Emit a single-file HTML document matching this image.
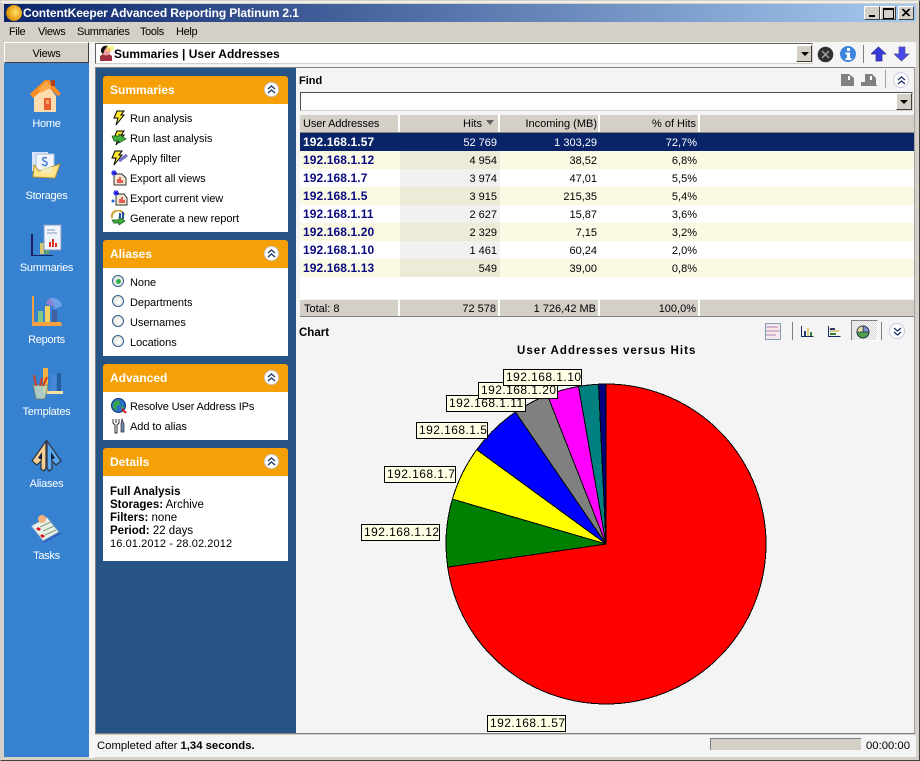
<!DOCTYPE html>
<html><head><meta charset="utf-8"><style>
html,body{margin:0;padding:0}
body{width:920px;height:761px;overflow:hidden;position:relative;background:#d4d0c8;font:11px/13px "Liberation Sans",sans-serif;color:#000}
.a,.t{position:absolute}
.t{white-space:nowrap;line-height:13px}
.b{font-weight:bold}
.s{left:4px;width:85px;text-align:center;color:#fff;font-size:11px;letter-spacing:-.25px}
.i{left:130px;font-size:11px;letter-spacing:-.05px}
.m{top:26px;font-size:11px;letter-spacing:-.35px}
.ph{position:absolute;left:103px;width:185px;height:28px;background:#f4a006;border-radius:3px 3px 0 0}
.pb{position:absolute;left:103px;width:185px;background:#fff}
.pt{position:absolute;left:110px;color:#fff;font-weight:bold;font-size:12px;white-space:nowrap;line-height:13px}
.c{position:absolute;width:13px;height:13px;border-radius:50%;background:#fff;border:1px solid #c8cce0;left:264px}
.c svg{position:absolute;left:2px;top:2px}
.r{position:absolute;left:300px;width:614px;height:18px}
.r .t{top:4px}
.r .n{top:3px;left:3px;font-weight:bold;color:#0a0a80;font-size:12px;letter-spacing:.1px}
.h1{right:417px}.h2{right:317px}.h3{right:217px}
.hb{position:absolute;left:400px;width:100px;height:18px;background:#ecebd8}
.hd{position:absolute;top:115px;height:17px;background:#d4d0c8;border-right:2px solid #fff;box-sizing:border-box}
.ft{position:absolute;top:300px;height:16px;background:#d4d0c8;border-right:2px solid #fff;box-sizing:border-box}
.lb{position:absolute;background:#ffffe6;border:1px solid #000;box-sizing:border-box;height:17px;font:12px/15px "Liberation Sans",sans-serif;letter-spacing:.45px;padding-left:2px;white-space:nowrap}
.rd{position:absolute;left:112px;width:10px;height:10px;border-radius:50%;border:1.5px solid #2f5c8f;background:radial-gradient(circle at 60% 60%,#fff,#dcd8cc)}
.btn{position:absolute;background:#d4d0c8;border:1px solid;border-color:#fff #404040 #404040 #fff;box-sizing:border-box}
svg{display:block}
</style></head><body>
<div class="a" style="left:0;top:0;width:920px;height:761px;border:1px solid #404040;border-top-color:#d4d0c8;border-left-color:#d4d0c8;box-sizing:border-box"></div>
<div class="a" style="left:1px;top:1px;width:917px;height:2px;background:#f0eee8"></div>
<div class="a" style="left:4px;top:4px;width:912px;height:18px;background:linear-gradient(90deg,#0a246a,#a6caf0)"></div>
<div class="a" style="left:6px;top:5px;width:16px;height:16px;border-radius:50%;background:radial-gradient(circle at 60% 45%,#ffe070,#e8a010 55%,#8a5a10)"></div>
<div class="t b" style="left:23px;top:7px;color:#fff;font-size:12px;letter-spacing:-.1px">ContentKeeper Advanced Reporting Platinum 2.1</div>
<div class="btn" style="left:864px;top:6px;width:16px;height:14px"><div class="a" style="left:4px;top:8px;width:6px;height:2px;background:#000"></div></div>
<div class="btn" style="left:880px;top:6px;width:16px;height:14px"><div class="a" style="left:2px;top:1px;width:9px;height:8px;border:1px solid #000;border-top-width:2px"></div></div>
<div class="btn" style="left:898px;top:6px;width:16px;height:14px"><svg width="14" height="12"><path d="M3 2L10 9M4 2L11 9M10 2L3 9M11 2L4 9" stroke="#000"/></svg></div>
<div class="t m" style="left:9px">File</div>
<div class="t m" style="left:38px">Views</div>
<div class="t m" style="left:77px">Summaries</div>
<div class="t m" style="left:140px">Tools</div>
<div class="t m" style="left:176px">Help</div>

<!-- sidebar -->
<div class="btn" style="left:4px;top:42px;width:85px;height:21px"></div>
<div class="t" style="left:4px;top:48px;width:85px;text-align:center;font-size:11px;letter-spacing:-.25px">Views</div>
<div class="a" style="left:4px;top:63px;width:85px;height:694px;background:#3682d0"></div>
<div class="a" style="left:89px;top:42px;width:6px;height:716px;background:#f4f4f4"></div>

<svg class="a" style="left:28px;top:78px" width="36" height="36"><path d="M6 17L18 28V34H6Z" fill="#ffe0b0"/><path d="M6 17V33L22 34H28V18L20 8Z" fill="#ffdcae"/><path d="M2 16L17 2H21L33 16L30 18L19 8L5 20Z" fill="#ff8a20"/><path d="M10 12L18 3L24 9L13 15Z" fill="#ffa848"/><rect x="23" y="2" width="4" height="6" fill="#b04018"/><rect x="16" y="20" width="7" height="12" fill="#e86030"/><rect x="18" y="22" width="3" height="4" fill="#f8a060"/></svg>
<svg class="a" style="left:31px;top:151px" width="31" height="30"><rect x="1" y="1" width="16" height="19" fill="#d8e4f8"/><rect x="5" y="3" width="18" height="19" fill="#f0f4fc" stroke="#a8c0e0"/><path d="M16 7c-3-1-5 0-4 2s5 1 4 4-4 1-5 0" fill="none" stroke="#3878d8" stroke-width="1.4"/><path d="M2 26L3 14L8 20L29 13L24 27Z" fill="#ffe488" stroke="#b89030"/><rect x="10" y="16" width="11" height="6" fill="#e8ecc8" opacity=".8"/></svg>
<svg class="a" style="left:31px;top:224px" width="32" height="32"><path d="M1 10V32H22" fill="none" stroke="#1a2060" stroke-width="2"/><rect x="9" y="19" width="4" height="11" fill="#d8c870"/><rect x="14" y="13" width="4" height="17" fill="#60a060"/><rect x="13" y="1" width="17" height="25" fill="#f0f4fc" stroke="#8098c0"/><path d="M16 6h8M16 9h10" stroke="#8098c0"/><path d="M19 23v-5M22 23v-8M25 23v-4" stroke="#e03020" stroke-width="2"/></svg>
<svg class="a" style="left:31px;top:296px" width="32" height="32"><path d="M1 0H3V26H30L31 30H1Z" fill="#f4a040"/><rect x="7" y="15" width="5" height="11" fill="#80c880"/><rect x="14" y="10" width="5" height="16" fill="#f8d060"/><rect x="21" y="14" width="5" height="12" fill="#4060a0"/><path d="M19 2a10 10 0 0 1 12 8l-7 3Z" fill="#70a0e8"/><path d="M19 2a10 10 0 0 0-4 6l9 3Z" fill="#9080d0"/></svg>
<svg class="a" style="left:31px;top:368px" width="32" height="32"><rect x="12" y="0" width="5" height="25" fill="#f4b040"/><rect x="20" y="7" width="5" height="18" fill="#4888d8"/><rect x="26" y="5" width="4" height="20" fill="#2060a0"/><rect x="14" y="23" width="18" height="3" fill="#f8e0a0"/><path d="M2 17H17L14 31H5Z" fill="#c0d8c0" opacity=".85" stroke="#708070"/><path d="M5 18L3 7M9 18L11 10M12 18L16 9" stroke="#d04020" stroke-width="2"/></svg>
<svg class="a" style="left:31px;top:440px" width="32" height="33"><path d="M15 1L1 21L6 25L10 21V29L13 31L15 28V1Z" fill="#f8d090" stroke="#303848" stroke-width="1.300"/><path d="M16 1L30 21L25 25L21 21V29L18 31L16 28V1Z" fill="#58a8f0" stroke="#303848" stroke-width="1.300"/><path d="M11 12L7 18L11 20ZM20 12L24 18L20 20Z" fill="#102040"/></svg>
<svg class="a" style="left:29px;top:512px" width="34" height="32"><path d="M2 15L18 6L32 22L15 31Z" fill="#3060c0"/><path d="M2 14L18 5L30 20L14 29Z" fill="#e8f0e8" stroke="#6090c0"/><circle cx="13" cy="7" r="4" fill="#f0b080"/><path d="M11 15L22 10M14 19L25 14M16 23L27 18" stroke="#80a080"/><path d="M9 15l3 2-2 2-3-2ZM13 22l3 2-2 2-3-2Z" fill="#e01020"/></svg>

<div class="t s" style="top:118px">Home</div>
<div class="t s" style="top:190px">Storages</div>
<div class="t s" style="top:262px">Summaries</div>
<div class="t s" style="top:334px">Reports</div>
<div class="t s" style="top:406px">Templates</div>
<div class="t s" style="top:478px">Aliases</div>
<div class="t s" style="top:550px">Tasks</div>

<!-- toolbar -->
<div class="a" style="left:95px;top:42px;width:821px;height:25px;background:#f4f4f4"></div>
<div class="a" style="left:95px;top:43px;width:718px;height:21px;background:#fff;border:1px solid;border-color:#606060 #d4d0c8 #d4d0c8 #606060;box-sizing:border-box"></div>
<svg class="a" style="left:98px;top:45px" width="16" height="17"><path d="M2 16V11L5 9H11L14 11V16Z" fill="#a03040"/><circle cx="8" cy="6" r="4.5" fill="#f0a0a0"/><path d="M3 7C2 1 8 0 10 1L7 4L5 9Z" fill="#101010"/><text x="8" y="6" font-size="7" font-family="Liberation Sans" fill="#f8f020" font-weight="bold">1P</text></svg>
<div class="t b" style="left:114px;top:48px;font-size:12px">Summaries | User Addresses</div>
<div class="btn" style="left:796px;top:45px;width:16px;height:17px"><div class="a" style="left:4px;top:6px;border:4px solid transparent;border-top:4px solid #000;border-bottom:0"></div></div>
<svg class="a" style="left:817px;top:46px" width="18" height="17"><circle cx="8.5" cy="8.5" r="7.8" fill="#303030"/><path d="M5 5L12 12M12 5L5 12" stroke="#a0a0a0" stroke-width="1.5"/></svg>
<svg class="a" style="left:839px;top:45px" width="18" height="18"><circle cx="9" cy="9" r="8" fill="#3f84dc"/><rect x="8" y="3" width="3" height="3" fill="#fff"/><path d="M6.500 7.500H11V13H12.500V15H6.500V13H8V9.500H6.500Z" fill="#fff"/></svg>
<div class="a" style="left:863px;top:45px;width:1px;height:18px;background:#808080"></div>
<svg class="a" style="left:871px;top:46px" width="16" height="16"><path d="M7.500 1L15 8H11V15H5V8H0Z" fill="#3a3ad8" stroke="#282890" stroke-width=".7"/></svg>
<svg class="a" style="left:894px;top:46px" width="16" height="16"><path d="M7.500 15L15 8H11V1H5V8H0Z" fill="#4848e8" stroke="#505090" stroke-width=".7"/></svg>

<!-- main frame -->
<div class="a" style="left:95px;top:67px;width:820px;height:667px;border:1px solid #808080;border-right-color:#a0a0a0;box-sizing:border-box;background:#f4f4f4"></div>
<div class="a" style="left:96px;top:68px;width:200px;height:665px;background:#265585"></div>

<!-- left panels -->
<div class="ph" style="top:76px"></div><div class="pb" style="top:104px;height:128px"></div>
<div class="pt" style="top:84px">Summaries</div>
<div class="ph" style="top:240px"></div><div class="pb" style="top:268px;height:88px"></div>
<div class="pt" style="top:248px">Aliases</div>
<div class="ph" style="top:364px"></div><div class="pb" style="top:392px;height:48px"></div>
<div class="pt" style="top:372px">Advanced</div>
<div class="ph" style="top:448px"></div><div class="pb" style="top:476px;height:85px"></div>
<div class="pt" style="top:456px">Details</div>
<div class="c" style="top:82px"><svg width="9" height="9"><path d="M1 4L4.500 1L8 4M1 8L4.500 5L8 8" fill="none" stroke="#18346c" stroke-width="1.300"/></svg></div>
<div class="c" style="top:246px"><svg width="9" height="9"><path d="M1 4L4.500 1L8 4M1 8L4.500 5L8 8" fill="none" stroke="#18346c" stroke-width="1.300"/></svg></div>
<div class="c" style="top:370px"><svg width="9" height="9"><path d="M1 4L4.500 1L8 4M1 8L4.500 5L8 8" fill="none" stroke="#18346c" stroke-width="1.300"/></svg></div>
<div class="c" style="top:454px"><svg width="9" height="9"><path d="M1 4L4.500 1L8 4M1 8L4.500 5L8 8" fill="none" stroke="#18346c" stroke-width="1.300"/></svg></div>

<svg class="a" style="left:112px;top:110px" width="14" height="16"><path d="M5 1H12L9 5H12L4 15L6 8H2Z" fill="#ffe830" stroke="#000"/></svg>
<svg class="a" style="left:111px;top:130px" width="17" height="16"><path d="M6 1H13L10 5H13L5 15L7 8H3Z" fill="#ffe830" stroke="#000"/><path d="M1 6L8 6L8 4L15 9L8 13V11H3Z" fill="#40b040" stroke="#105010" stroke-width=".7"/></svg>
<svg class="a" style="left:111px;top:150px" width="17" height="16"><path d="M4 1H11L8 5H11L3 15L5 8H1Z" fill="#ffe830" stroke="#000"/><path d="M8 11L16 5" stroke="#7070c0" stroke-width="3"/></svg>
<svg class="a" style="left:111px;top:170px" width="16" height="16"><path d="M3 4H11L15 8V15H3Z" fill="#f0e8d0" stroke="#303030"/><path d="M7 13V9M9 13V7M11 13V10" stroke="#e01010" stroke-width="1.300"/><path d="M1 1l4 4M5 1L1 5M3 0v6M0 3h6" stroke="#1010e0"/></svg>
<svg class="a" style="left:111px;top:190px" width="17" height="16"><path d="M5 4H13L16 8V15H5Z" fill="#f0e8d0" stroke="#303030"/><path d="M9 13V9M11 13V7M13 13V10" stroke="#e01010" stroke-width="1.300"/><path d="M5 0l0 6M2 3h6M3 1l4 4M7 1L3 5" stroke="#1010e0"/><circle cx="2" cy="11" r="1.500" fill="#2060d0"/></svg>
<svg class="a" style="left:111px;top:210px" width="16" height="16"><path d="M1 8a6 6 0 0 1 12-3" fill="none" stroke="#d0a030" stroke-width="2"/><path d="M1 10H8V7L14 11L8 15V13H3Z" fill="#40b040" stroke="#105010" stroke-width=".7"/><path d="M9 8V3M12 9V2" stroke="#2050a0" stroke-width="2"/></svg>
<svg class="a" style="left:111px;top:398px" width="16" height="16"><circle cx="7.500" cy="7.500" r="7" fill="#2a70c8" stroke="#103070"/><path d="M3 4L8 2L9 6L5 9L6 13L2 10Z" fill="#38a840"/><path d="M10 7L13 9L11 12Z" fill="#38a840"/><path d="M11 11L15 15" stroke="#d02020" stroke-width="2"/></svg>
<svg class="a" style="left:112px;top:418px" width="14" height="16"><path d="M1 1V5L3 7V15H5V7L7 5V1M4 1V5" fill="none" stroke="#303030"/><path d="M10 1L12 6V14H9V6Z" fill="#7088b8" stroke="#303030" stroke-width=".7"/></svg>

<div class="t i" style="top:113px">Run analysis</div>
<div class="t i" style="top:133px">Run last analysis</div>
<div class="t i" style="top:153px">Apply filter</div>
<div class="t i" style="top:173px">Export all views</div>
<div class="t i" style="top:193px">Export current view</div>
<div class="t i" style="top:213px">Generate a new report</div>
<div class="t i" style="top:277px">None</div>
<div class="t i" style="top:297px">Departments</div>
<div class="t i" style="top:317px">Usernames</div>
<div class="t i" style="top:337px">Locations</div>
<div class="t i" style="top:401px;letter-spacing:-.15px">Resolve User Address IPs</div>
<div class="t i" style="top:421px">Add to alias</div>
<div class="rd" style="top:275px"><div class="a" style="left:2.500px;top:2.500px;width:5px;height:5px;border-radius:50%;background:#28b048"></div></div>
<div class="rd" style="top:295px"></div>
<div class="rd" style="top:315px"></div>
<div class="rd" style="top:335px"></div>

<div class="t" style="left:110px;top:486px;font-size:11.5px"><b>Full Analysis</b></div>
<div class="t" style="left:110px;top:499px;font-size:11.5px"><b>Storages:</b> Archive</div>
<div class="t" style="left:110px;top:512px;font-size:11.5px"><b>Filters:</b> none</div>
<div class="t" style="left:110px;top:525px;font-size:11.5px"><b>Period:</b> 22 days</div>
<div class="t" style="left:110px;top:538px;font-size:11px;letter-spacing:.1px">16.01.2012 - 28.02.2012</div>

<!-- find -->
<div class="t b" style="left:299px;top:75px">Find</div>
<svg class="a" style="left:840px;top:72px" width="15" height="15"><path d="M1 2H9L14 6V14H1Z" fill="#808080"/><rect x="8" y="4" width="2" height="4" fill="#fff"/></svg>
<svg class="a" style="left:861px;top:72px" width="16" height="15"><path d="M4 2H11L15 6V13H16V14H0V10H4Z" fill="#808080"/><rect x="9" y="4" width="2" height="4" fill="#fff"/></svg>
<div class="a" style="left:885px;top:70px;width:1px;height:18px;background:#a0a0a0"></div>
<div class="a" style="left:893px;top:72px;width:14px;height:14px;border-radius:50%;background:#fff;border:1px solid #c8cce0"><svg width="9" height="9" style="position:absolute;left:2.500px;top:2.500px"><path d="M1 4L4.500 1L8 4M1 8L4.500 5L8 8" fill="none" stroke="#18346c" stroke-width="1.300"/></svg></div>
<div class="a" style="left:300px;top:92px;width:613px;height:19px;background:#fff;border:1px solid;border-color:#505050 #d4d0c8 #d4d0c8 #505050;box-sizing:border-box"></div>
<div class="btn" style="left:896px;top:93px;width:16px;height:17px"><div class="a" style="left:3px;top:6px;border:4px solid transparent;border-top:4px solid #000;border-bottom:0"></div></div>

<!-- table -->
<div class="a" style="left:300px;top:115px;width:614px;height:17px;background:#d4d0c8"></div>
<div class="a" style="left:300px;top:132px;width:614px;height:1px;background:#808080"></div>
<div class="hd" style="left:300px;width:100px"></div><div class="hd" style="left:400px;width:100px"></div><div class="hd" style="left:500px;width:100px"></div><div class="hd" style="left:600px;width:100px"></div>
<div class="t" style="left:303px;top:118px;letter-spacing:-.1px">User Addresses</div>
<div class="t" style="right:438px;top:118px">Hits</div>
<div class="a" style="left:486px;top:120px;border:4px solid transparent;border-top:5px solid #606060;border-bottom:0"></div>
<div class="t" style="top:118px;right:323px">Incoming (MB)</div>
<div class="t" style="top:118px;right:224px">% of Hits</div>

<div class="a" style="left:300px;top:133px;width:614px;height:166px;background:#fff"></div>
<div class="r" style="top:133px;background:#0a246a;color:#fff"><div class="t n" style="color:#fff">192.168.1.57</div><div class="t" style="right:417px">52 769</div><div class="t" style="right:317px">1 303,29</div><div class="t" style="right:217px">72,7%</div></div>
<div class="r" style="top:151px;background:#f9f9e4"></div><div class="hb" style="top:151px"></div>
<div class="hb" style="top:169px;background:#f1f1f1"></div>
<div class="r" style="top:187px;background:#f9f9e4"></div><div class="hb" style="top:187px"></div>
<div class="hb" style="top:205px;background:#f1f1f1"></div>
<div class="r" style="top:223px;background:#f9f9e4"></div><div class="hb" style="top:223px"></div>
<div class="hb" style="top:241px;background:#f1f1f1"></div>
<div class="r" style="top:259px;background:#f9f9e4"></div><div class="hb" style="top:259px"></div>
<div class="r" style="top:151px"><div class="t n">192.168.1.12</div><div class="t h1">4 954</div><div class="t h2">38,52</div><div class="t h3">6,8%</div></div>
<div class="r" style="top:169px"><div class="t n">192.168.1.7</div><div class="t h1">3 974</div><div class="t h2">47,01</div><div class="t h3">5,5%</div></div>
<div class="r" style="top:187px"><div class="t n">192.168.1.5</div><div class="t h1">3 915</div><div class="t h2">215,35</div><div class="t h3">5,4%</div></div>
<div class="r" style="top:205px"><div class="t n">192.168.1.11</div><div class="t h1">2 627</div><div class="t h2">15,87</div><div class="t h3">3,6%</div></div>
<div class="r" style="top:223px"><div class="t n">192.168.1.20</div><div class="t h1">2 329</div><div class="t h2">7,15</div><div class="t h3">3,2%</div></div>
<div class="r" style="top:241px"><div class="t n">192.168.1.10</div><div class="t h1">1 461</div><div class="t h2">60,24</div><div class="t h3">2,0%</div></div>
<div class="r" style="top:259px"><div class="t n">192.168.1.13</div><div class="t h1">549</div><div class="t h2">39,00</div><div class="t h3">0,8%</div></div>

<div class="a" style="left:300px;top:300px;width:614px;height:16px;background:#d4d0c8"></div>
<div class="a" style="left:300px;top:316px;width:614px;height:1px;background:#808080"></div>
<div class="ft" style="left:300px;width:100px"></div><div class="ft" style="left:400px;width:100px"></div><div class="ft" style="left:500px;width:100px"></div><div class="ft" style="left:600px;width:100px"></div>
<div class="t" style="left:304px;top:303px">Total: 8</div>
<div class="t" style="right:424px;top:303px">72 578</div>
<div class="t" style="right:324px;top:303px">1 726,42 MB</div>
<div class="t" style="right:224px;top:303px">100,0%</div>

<!-- chart -->
<div class="t b" style="left:299px;top:327px;font-size:11.5px">Chart</div>
<svg class="a" style="left:765px;top:323px" width="16" height="17"><rect x=".5" y=".5" width="15" height="16" fill="#f8e8ec" stroke="#80a0b8"/><path d="M1 4h12M1 8h14M1 12h10" stroke="#d0b8d0" stroke-width="2"/></svg>
<div class="a" style="left:792px;top:322px;width:1px;height:18px;background:#808080"></div>
<svg class="a" style="left:801px;top:325px" width="13" height="13"><path d="M.5 1V11.500H12.500" fill="none" stroke="#182860"/><rect x="3" y="6" width="2" height="5" fill="#283870"/><rect x="6" y="3" width="2" height="8" fill="#d8d080"/><rect x="9" y="7" width="2" height="4" fill="#308040"/></svg>
<svg class="a" style="left:828px;top:325px" width="13" height="13"><path d="M.5 1V11.500H12.500" fill="none" stroke="#182860"/><rect x="2" y="3" width="5" height="2" fill="#283870"/><rect x="2" y="5" width="9" height="2" fill="#d8d080"/><rect x="2" y="8" width="6" height="2" fill="#308040"/></svg>
<div class="a" style="left:851px;top:320px;width:27px;height:21px;background:#f0f0f0 repeating-conic-gradient(#d8d8d8 0 25%,#f8f8f8 0 50%) 0 0/2px 2px;border:1px solid;border-color:#808080 #fff #fff #808080;box-sizing:border-box"></div>
<svg class="a" style="left:856px;top:325px" width="14" height="14"><circle cx="7" cy="7" r="6" fill="#50a050" stroke="#203040"/><path d="M7 7V1A6 6 0 0 1 13 7Z" fill="#8090d0" stroke="#203040" stroke-width=".7"/><path d="M7 7L1 7A6 6 0 0 1 7 1Z" fill="#e8e0a0" stroke="#203040" stroke-width=".7"/></svg>
<div class="a" style="left:881px;top:322px;width:1px;height:18px;background:#808080"></div>
<div class="a" style="left:889px;top:323px;width:14px;height:14px;border-radius:50%;background:#fff;border:1px solid #c8cce0"><svg width="9" height="9" style="position:absolute;left:2.500px;top:2.500px"><path d="M1 1L4.500 4L8 1M1 5L4.500 8L8 5" fill="none" stroke="#18346c" stroke-width="1.300"/></svg></div>
<div class="t b" style="left:517px;top:345px;font-size:11.5px;letter-spacing:1.04px">User Addresses versus Hits</div>

<svg class="a" style="left:440px;top:378px" width="332" height="332" shape-rendering="crispEdges">
<g transform="translate(-440 -378)" stroke="#000" stroke-width="1">
<path d="M606 544L606 384A160 160 0 1 1 447.700 567.100Z" fill="#ff0000"/>
<path d="M606 544L447.700 567.100A160 160 0 0 1 452.400 499.100Z" fill="#008000"/>
<path d="M606 544L452.400 499.100A160 160 0 0 1 476.700 449.700Z" fill="#ffff00"/>
<path d="M606 544L476.700 449.700A160 160 0 0 1 515.400 412.100Z" fill="#0000ff"/>
<path d="M606 544L515.400 412.100A160 160 0 0 1 547.400 395.100Z" fill="#808080"/>
<path d="M606 544L547.400 395.100A160 160 0 0 1 578.500 386.400Z" fill="#ff00ff"/>
<path d="M606 544L578.500 386.400A160 160 0 0 1 598.500 384.200Z" fill="#008080"/>
<path d="M606 544L598.500 384.200A160 160 0 0 1 606 384Z" fill="#000080"/>
</g></svg>
<div class="lb" style="left:361px;top:524px;width:79px">192.168.1.12</div>
<div class="lb" style="left:384px;top:466px;width:72px">192.168.1.7</div>
<div class="lb" style="left:416px;top:422px;width:72px">192.168.1.5</div>
<div class="lb" style="left:446px;top:395px;width:80px">192.168.1.11</div>
<div class="lb" style="left:478px;top:382px;width:80px">192.168.1.20</div>
<div class="lb" style="left:503px;top:369px;width:79px">192.168.1.10</div>
<div class="lb" style="left:487px;top:715px;width:79px">192.168.1.57</div>

<!-- status -->
<div class="a" style="left:95px;top:735px;width:821px;height:22px;background:#f4f4f4"></div>
<div class="t" style="left:97px;top:740px;font-size:11.3px">Completed after <b>1,34 seconds.</b></div>
<div class="a" style="left:710px;top:738px;width:151px;height:12px;background:#d4d0c8;border-top:1px solid #808080;border-left:1px solid #808080;box-sizing:border-box"></div>
<div class="t" style="left:866px;top:740px;font-size:11.3px">00:00:00</div>
</body></html>
